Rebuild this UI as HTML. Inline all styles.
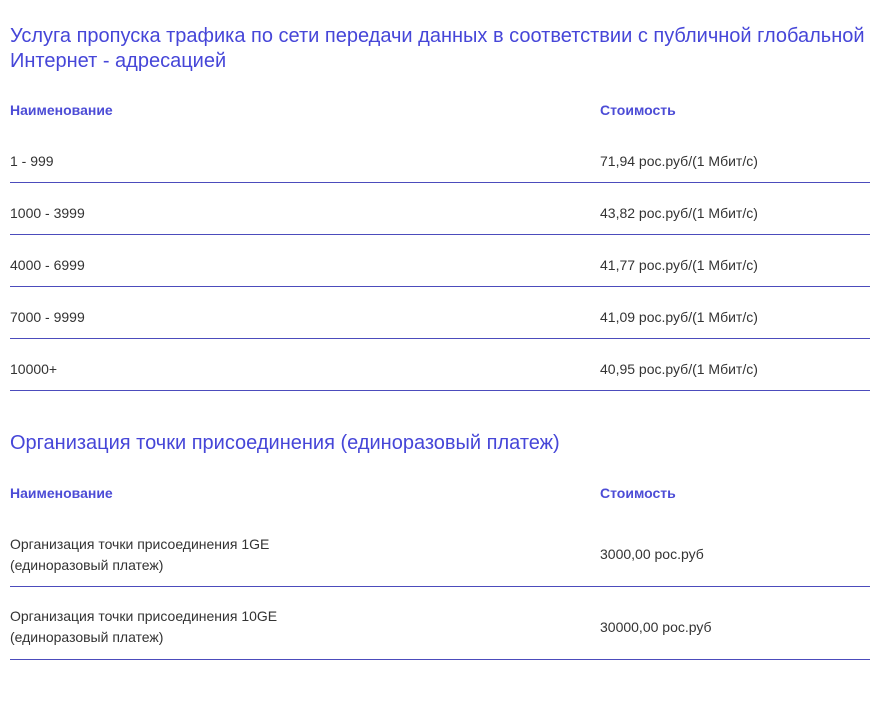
<!DOCTYPE html>
<html><head><meta charset="utf-8"><style>
body{margin:0;background:#fff;width:894px;height:702px;position:relative;font-family:"Liberation Sans",Arial,sans-serif;overflow:hidden}
.t{position:absolute;left:10px;color:#4646d8;font-size:20px;line-height:25px;white-space:nowrap}
.h{position:absolute;color:#4c4cd6;font-weight:bold;font-size:14px;line-height:16px}
.c{position:absolute;color:#333;font-size:14px;line-height:21px;white-space:nowrap}
.l{position:absolute;left:10px;width:860px;height:1px;background:#4c4cbc}
</style></head><body>
<div class="t" style="top:24px">Услуга пропуска трафика по сети передачи данных в соответствии с публичной глобальной<br>Интернет - адресацией</div>
<div class="h" style="left:10px;top:102px">Наименование</div>
<div class="h" style="left:600px;top:102px">Стоимость</div>

<div class="c" style="left:10px;top:151px">1 - 999</div><div class="c" style="left:600px;top:151px">71,94 рос.руб/(1 Мбит/с)</div><div class="l" style="top:182px"></div>
<div class="c" style="left:10px;top:203px">1000 - 3999</div><div class="c" style="left:600px;top:203px">43,82 рос.руб/(1 Мбит/с)</div><div class="l" style="top:234px"></div>
<div class="c" style="left:10px;top:255px">4000 - 6999</div><div class="c" style="left:600px;top:255px">41,77 рос.руб/(1 Мбит/с)</div><div class="l" style="top:286px"></div>
<div class="c" style="left:10px;top:307px">7000 - 9999</div><div class="c" style="left:600px;top:307px">41,09 рос.руб/(1 Мбит/с)</div><div class="l" style="top:338px"></div>
<div class="c" style="left:10px;top:359px">10000+</div><div class="c" style="left:600px;top:359px">40,95 рос.руб/(1 Мбит/с)</div><div class="l" style="top:390px"></div>

<div class="t" style="top:431px">Организация точки присоединения (единоразовый платеж)</div>
<div class="h" style="left:10px;top:485px">Наименование</div>
<div class="h" style="left:600px;top:485px">Стоимость</div>

<div class="c" style="left:10px;top:534px">Организация точки присоединения 1GE<br>(единоразовый платеж)</div><div class="c" style="left:600px;top:544px">3000,00 рос.руб</div><div class="l" style="top:586px"></div>
<div class="c" style="left:10px;top:606px">Организация точки присоединения 10GE<br>(единоразовый платеж)</div><div class="c" style="left:600px;top:617px">30000,00 рос.руб</div><div class="l" style="top:659px"></div>
</body></html>
